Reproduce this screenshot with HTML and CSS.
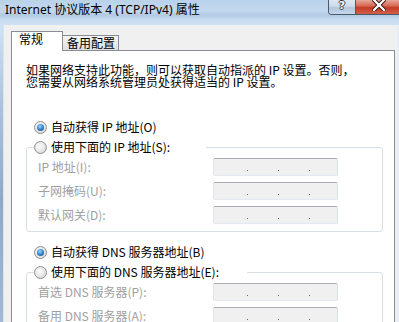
FILE: index.html
```html
<!DOCTYPE html>
<html lang="zh-CN">
<head>
    <meta charset="UTF-8">
    <title>Internet 协议版本 4 (TCP/IPv4) 属性</title>
    <link rel="stylesheet" href="styles.css">
</head>
<body>
    <div class="window">
        <div class="titlebar">
            <span class="title">Internet 协议版本 4 (TCP/IPv4) 属性</span>
            <div class="caption-buttons">
                <span class="btn-help">?</span>
                <span class="btn-close">
                    <svg width="14" height="11" viewBox="0 0 14 11">
                        <path d="M2 0 L12 10 M12 0 L2 10" stroke="#3a1a16" stroke-width="4.2" stroke-linecap="square"/>
                        <path d="M2 0 L12 10 M12 0 L2 10" stroke="#ffffff" stroke-width="2.2" stroke-linecap="square"/>
                    </svg>
                </span>
            </div>
        </div>

        <div class="client">
            <div class="tabs">
                <div class="tab tab-active">常规</div>
                <div class="tab">备用配置</div>
            </div>

            <div class="panel">
                <p class="intro">如果网络支持此功能，则可以获取自动指派的 IP 设置。否则，<br>您需要从网络系统管理员处获得适当的 IP 设置。</p>

                <div class="option option-first"><span class="radio checked"></span>自动获得 IP 地址(O)</div>
                <fieldset class="group">
                    <legend class="option legend-ip"><span class="radio"></span>使用下面的 IP 地址(S):</legend>
                    <div class="field-row">
                        <span class="field-label">IP 地址(I):</span>
                        <span class="ipbox"><i class="dot"></i><i class="dot"></i><i class="dot"></i></span>
                    </div>
                    <div class="field-row">
                        <span class="field-label">子网掩码(U):</span>
                        <span class="ipbox"><i class="dot"></i><i class="dot"></i><i class="dot"></i></span>
                    </div>
                    <div class="field-row">
                        <span class="field-label">默认网关(D):</span>
                        <span class="ipbox"><i class="dot"></i><i class="dot"></i><i class="dot"></i></span>
                    </div>
                </fieldset>

                <div class="option option-dns"><span class="radio checked"></span>自动获得 DNS 服务器地址(B)</div>
                <fieldset class="group">
                    <legend class="option legend-dns"><span class="radio"></span>使用下面的 DNS 服务器地址(E):</legend>
                    <div class="field-row">
                        <span class="field-label">首选 DNS 服务器(P):</span>
                        <span class="ipbox"><i class="dot"></i><i class="dot"></i><i class="dot"></i></span>
                    </div>
                    <div class="field-row">
                        <span class="field-label">备用 DNS 服务器(A):</span>
                        <span class="ipbox"><i class="dot"></i><i class="dot"></i><i class="dot"></i></span>
                    </div>
                </fieldset>
            </div>
        </div>
    </div>
</body>
</html>
```

FILE: styles.css
```css
* {
    margin: 0;
    padding: 0;
    box-sizing: border-box;
}

body {
    width: 399px;
    height: 322px;
    overflow: hidden;
    font-family: "Noto Sans CJK SC", sans-serif;
    font-size: 12px;
    color: #000;
}

.window {
    height: 322px;
    display: flex;
    flex-direction: column;
    background: linear-gradient(180deg, #bad2ea 0, #c2d8ee 11px, #b3cae3 15px, #c9ddf2 20px, #cfe2f5 25px, #a9c1db 110px, #8ea9c8 200px, #a1b9d4 322px);
}

/* Title bar */
.titlebar {
    flex: none;
    height: 25px;
    display: flex;
    justify-content: space-between;
    align-items: flex-start;
}

.title {
    padding: 2px 0 0 5px;
    line-height: 16px;
    font-family: "Noto Sans", "Noto Sans CJK SC", sans-serif;
    font-size: 12px;
    white-space: nowrap;
}

.caption-buttons {
    display: flex;
    height: 15px;
    border: 1px solid #4a5a6e;
    border-top: none;
    border-right: none;
    border-radius: 0 0 0 4px;
    overflow: hidden;
}

.btn-help {
    width: 27px;
    display: flex;
    justify-content: center;
    align-items: flex-start;
    background: linear-gradient(180deg, #dfe9f4 0, #cbdaea 45%, #b3c7dd 55%, #c4d6ea 100%);
    border-right: 1px solid #4a5a6e;
    color: #fff;
    font-family: "DejaVu Sans", sans-serif;
    font-weight: bold;
    font-size: 11px;
    line-height: 12px;
    text-shadow: 1px 0 #3b3b3b, -1px 0 #3b3b3b, 0 1px #3b3b3b, 0 -1px #3b3b3b;
}

.btn-close {
    width: 43px;
    display: flex;
    justify-content: center;
    padding-left: 2px;
    background: linear-gradient(180deg, #e6a89b 0, #d86b58 40%, #c43b24 55%, #d2614a 100%);
}

/* Client area */
.client {
    flex: 1;
    margin-left: 3px;
    border-left: 1px solid #dae4ee;
    border-right: 2px solid #e6edf4;
    background: #f0f0f0;
    padding: 6px 2px 0 7px;
    display: flex;
    flex-direction: column;
    min-height: 0;
}

.tabs {
    flex: none;
    height: 19px;
    display: flex;
    align-items: flex-end;
}

.tab {
    width: 57px;
    height: 15px;
    margin-left: -1px;
    padding-left: 4px;
    line-height: 14px;
    border: 1px solid #898c95;
    border-bottom: none;
    background: linear-gradient(180deg, #f4f4f4 0, #ebebeb 50%, #dedede 100%);
    white-space: nowrap;
}

.tab-active {
    position: relative;
    z-index: 1;
    width: 52px;
    height: 20px;
    margin-left: 0;
    margin-bottom: -1px;
    padding-left: 7px;
    background: #fff;
}

.panel {
    flex: 1;
    background: #fff;
    border: 1px solid #898c95;
    padding: 13px 0 0 14px;
}

.intro {
    line-height: 12px;
    white-space: nowrap;
}

/* Radio rows */
.option {
    display: flex;
    align-items: center;
    gap: 4px;
    height: 20px;
    line-height: 12px;
    white-space: nowrap;
}

.option-first {
    margin: 29px 0 0 8px;
}

.option-dns {
    margin: 10px 0 0 8px;
}

.radio {
    flex: none;
    width: 13px;
    height: 13px;
    border-radius: 50%;
    border: 1px solid #8e8f8f;
    background: radial-gradient(circle at 40% 38%, #fbfbfb 0, #e8e8e8 50%, #cdcdcd 100%);
    display: flex;
    align-items: center;
    justify-content: center;
}

.radio.checked::after {
    content: "";
    width: 7px;
    height: 7px;
    border-radius: 50%;
    background: radial-gradient(circle at 42% 35%, #9edcff 0, #3a8ad0 45%, #154574 100%);
}

/* Group boxes */
.group {
    border: 1px solid #d5dfe5;
    border-radius: 3px;
    margin-right: 11px;
    padding: 1px 0 7px 0;
    min-width: 0;
}

.group legend {
    margin-left: 7px;
    padding: 0;
    background: #fff;
}

.legend-ip {
    width: 172px;
}

.legend-dns {
    width: 213px;
}

.field-row {
    display: grid;
    grid-template-columns: 175px 125px;
    align-items: center;
    height: 18px;
    padding-left: 11px;
    margin-top: 6px;
}

.field-row:first-of-type {
    margin-top: 0;
}

.field-label {
    color: #a0a0a0;
    line-height: 12px;
    white-space: nowrap;
}

.ipbox {
    height: 18px;
    display: flex;
    align-items: flex-end;
    gap: 30px;
    padding: 0 0 4px 33px;
    border: 1px solid;
    border-color: #abadb3 #dbdfe6 #e3e9ef #e2e3ea;
    border-radius: 2px;
    background: #f0f0f0;
}

.dot {
    width: 1px;
    height: 1px;
    background: #6a6a6a;
}
```
